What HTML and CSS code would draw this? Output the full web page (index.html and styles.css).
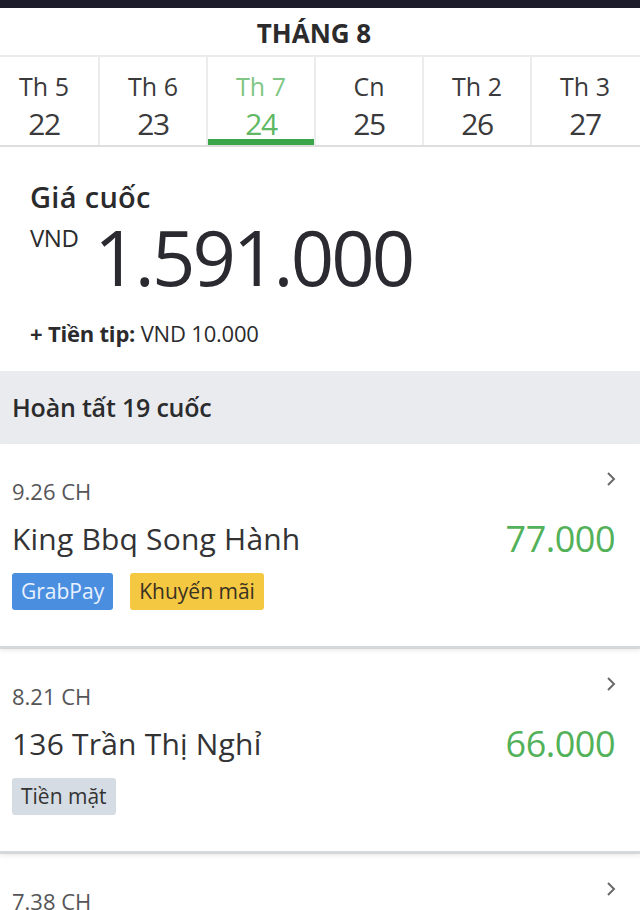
FILE: index.html
```html
<!DOCTYPE html>
<html lang="vi">
<head>
<meta charset="utf-8">
<title>Thu nhập</title>
<link rel="stylesheet" href="styles.css">
</head>
<body>
<div class="statusbar"></div>
<div class="month">THÁNG 8</div>
<div class="days-wrap">
  <div class="days">
    <div class="day"><span class="dl">Th 5</span><span class="dn">22</span></div>
    <div class="day"><span class="dl">Th 6</span><span class="dn">23</span></div>
    <div class="day active"><span class="dl">Th 7</span><span class="dn">24</span></div>
    <div class="day"><span class="dl">Cn</span><span class="dn">25</span></div>
    <div class="day"><span class="dl">Th 2</span><span class="dn">26</span></div>
    <div class="day"><span class="dl">Th 3</span><span class="dn">27</span></div>
  </div>
</div>
<div class="summary">
  <div class="sum-title">Giá cuốc</div>
  <div class="price">
    <span class="cur">VND</span>
    <span class="total">1.591.000</span>
  </div>
  <div class="tip"><b>+ Tiền tip:</b> VND 10.000</div>
</div>
<div class="section">Hoàn tất 19 cuốc</div>
<div class="ride">
  <div class="ride-top">
    <span class="time">9.26 CH</span>
    <svg class="chev" width="12" height="16" viewBox="0 0 12 16"><polyline points="3,2 9,8 3,14" fill="none" stroke="#6a6a6a" stroke-width="2"/></svg>
  </div>
  <div class="ride-mid">
    <span class="place">King Bbq Song Hành</span>
    <span class="amount">77.000</span>
  </div>
  <div class="tags">
    <span class="tag blue">GrabPay</span>
    <span class="tag yellow">Khuyến mãi</span>
  </div>
</div>
<div class="ride">
  <div class="ride-top">
    <span class="time">8.21 CH</span>
    <svg class="chev" width="12" height="16" viewBox="0 0 12 16"><polyline points="3,2 9,8 3,14" fill="none" stroke="#6a6a6a" stroke-width="2"/></svg>
  </div>
  <div class="ride-mid">
    <span class="place">136 Trần Thị Nghỉ</span>
    <span class="amount">66.000</span>
  </div>
  <div class="tags">
    <span class="tag gray">Tiền mặt</span>
  </div>
</div>
<div class="ride last">
  <div class="ride-top">
    <span class="time">7.38 CH</span>
    <svg class="chev" width="12" height="16" viewBox="0 0 12 16"><polyline points="3,2 9,8 3,14" fill="none" stroke="#6a6a6a" stroke-width="2"/></svg>
  </div>
</div>
</body>
</html>
```
FILE: styles.css
```css
html, body {
  margin: 0;
  padding: 0;
}
body {
  width: 640px;
  height: 910px;
  overflow: hidden;
  background: #ffffff;
  font-family: "Open Sans", "Noto Sans", sans-serif;
  color: #2d2d2f;
}
.statusbar {
  height: 8px;
  background: #1d1c2b;
}
.month {
  padding: 4px 12px 0 0;
  height: 43px;
  line-height: 43px;
  text-align: center;
  font-size: 26px;
  font-weight: 700;
  color: #2b2b2d;
  border-bottom: 2px solid #ebebeb;
}
.days-wrap {
  overflow: hidden;
  border-bottom: 2px solid #dedede;
}
.days {
  display: grid;
  grid-template-columns: repeat(6, 108px);
  margin-left: -10px;
}
.day {
  height: 88px;
  box-sizing: border-box;
  padding-top: 14px;
  display: flex;
  flex-direction: column;
  align-items: center;
  border-left: 2px solid #ececec;
  color: #3a3a3c;
}
.day:first-child {
  border-left: none;
}
.dl {
  font-size: 25px;
  line-height: 30px;
}
.dn {
  margin-top: 5px;
  font-size: 30px;
  line-height: 36px;
  letter-spacing: -1.5px;
}
.day.active {
  box-shadow: inset 0 -6px 0 #3aa64a;
}
.day.active .dl {
  color: #80c684;
}
.day.active .dn {
  color: #5fb864;
}
.summary {
  padding: 32px 30px 24px 30px;
}
.sum-title {
  font-size: 29px;
  line-height: 36px;
  font-weight: 600;
  letter-spacing: 0.3px;
  color: #2b2b2d;
}
.price {
  display: flex;
  align-items: flex-start;
  margin-top: 4px;
}
.cur {
  font-size: 24px;
  line-height: 24px;
  margin-top: 7px;
  margin-right: 16px;
  letter-spacing: -0.5px;
  color: #2b2b2d;
}
.total {
  font-size: 76px;
  line-height: 76px;
  letter-spacing: -2.9px;
  color: #2a2a30;
}
.tip {
  margin-top: 24px;
  font-size: 22px;
  line-height: 28px;
  letter-spacing: -0.2px;
  color: #2b2b2d;
}
.tip b {
  font-weight: 700;
}
.section {
  height: 73px;
  line-height: 73px;
  padding-left: 12px;
  background: #e9ebef;
  font-size: 25px;
  font-weight: 600;
  letter-spacing: -0.2px;
  color: #2b2b2d;
}
.ride {
  height: 205px;
  box-sizing: border-box;
  padding: 33px 23px 0 12px;
  border-bottom: 3px solid #d6d9dc;
  box-shadow: 0 2px 4px rgba(0, 0, 0, 0.08);
}
.ride-top {
  display: flex;
  justify-content: space-between;
  align-items: flex-start;
}
.time {
  font-size: 22px;
  line-height: 28px;
  color: #555558;
}
.chev {
  margin-top: -6px;
}
.ride-mid {
  margin-top: 14px;
  display: flex;
  justify-content: space-between;
  align-items: center;
  height: 40px;
}
.place {
  font-size: 30px;
  line-height: 40px;
  letter-spacing: 0.2px;
  color: #333335;
}
.amount {
  font-size: 36px;
  line-height: 40px;
  color: #52b159;
  margin-right: 2px;
  letter-spacing: -0.5px;
}
.tags {
  margin-top: 14px;
  display: flex;
  gap: 17px;
}
.tag {
  height: 37px;
  line-height: 37px;
  padding: 0 9px;
  border-radius: 3px;
  font-size: 21px;
}
.tag.blue {
  background: #4a8ee0;
  color: #e8f1ff;
}
.tag.yellow {
  background: #f5c842;
  color: #3a3222;
}
.tag.gray {
  background: #d5dce3;
  color: #333;
}
```
